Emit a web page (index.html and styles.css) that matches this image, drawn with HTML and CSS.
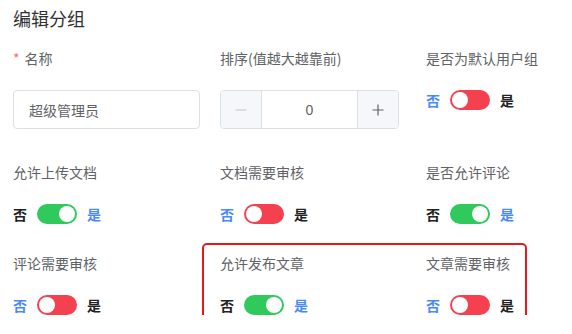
FILE: index.html
```html
<!DOCTYPE html>
<html lang="zh-CN">
<head>
    <meta charset="UTF-8">
    <meta name="viewport" content="width=device-width, initial-scale=1.0">
    <title>编辑分组</title>
    <link rel="stylesheet" href="styles.css">
</head>
<body>
    <div class="panel">
        <h2 class="title">编辑分组</h2>
        <div class="form">
            <!-- row 1 -->
            <div class="item item-wide">
                <label class="label"><span class="req">*</span>名称</label>
                <input class="text-input" type="text" value="超级管理员">
            </div>
            <div class="item item-wide">
                <label class="label">排序(值越大越靠前)</label>
                <div class="stepper">
                    <button class="step step-minus">
                        <svg width="12" height="12" viewBox="0 0 12 12"><path d="M0.5 6h11" stroke="#c0c4cc" stroke-width="1.2"/></svg>
                    </button>
                    <div class="step-value">0</div>
                    <button class="step step-plus">
                        <svg width="12" height="12" viewBox="0 0 12 12"><path d="M0.5 6h11M6 0.5v11" stroke="#606266" stroke-width="1.2"/></svg>
                    </button>
                </div>
            </div>
            <div class="item item-wide">
                <label class="label">是否为默认用户组</label>
                <div class="switch-row">
                    <span class="opt active">否</span>
                    <span class="switch off"><span class="knob"></span></span>
                    <span class="opt">是</span>
                </div>
            </div>

            <!-- row 2 -->
            <div class="item">
                <label class="label">允许上传文档</label>
                <div class="switch-row">
                    <span class="opt">否</span>
                    <span class="switch on"><span class="knob"></span></span>
                    <span class="opt active">是</span>
                </div>
            </div>
            <div class="item">
                <label class="label">文档需要审核</label>
                <div class="switch-row">
                    <span class="opt active">否</span>
                    <span class="switch off"><span class="knob"></span></span>
                    <span class="opt">是</span>
                </div>
            </div>
            <div class="item">
                <label class="label">是否允许评论</label>
                <div class="switch-row">
                    <span class="opt">否</span>
                    <span class="switch on"><span class="knob"></span></span>
                    <span class="opt active">是</span>
                </div>
            </div>

            <!-- row 3 -->
            <div class="item">
                <label class="label">评论需要审核</label>
                <div class="switch-row">
                    <span class="opt active">否</span>
                    <span class="switch off"><span class="knob"></span></span>
                    <span class="opt">是</span>
                </div>
            </div>
            <div class="item">
                <label class="label">允许发布文章</label>
                <div class="switch-row">
                    <span class="opt">否</span>
                    <span class="switch on"><span class="knob"></span></span>
                    <span class="opt active">是</span>
                </div>
            </div>
            <div class="item">
                <label class="label">文章需要审核</label>
                <div class="switch-row">
                    <span class="opt active">否</span>
                    <span class="switch off"><span class="knob"></span></span>
                    <span class="opt">是</span>
                </div>
            </div>

            <!-- highlight box over the last two items -->
            <div class="highlight"></div>
        </div>
    </div>
</body>
</html>
```

FILE: styles.css
```css
body {
    margin: 0;
    padding: 0;
    background-color: #fff;
    font-family: "Noto Sans CJK SC", "Noto Sans", Arial, sans-serif;
    color: #303133;
}
.panel {
    padding: 4px 13px 0 13px;
}
.title {
    margin: 0;
    font-size: 18px;
    line-height: 28px;
    font-weight: 400;
    color: #303133;
}
.form {
    position: relative;
    display: grid;
    grid-template-columns: 207px 206px 1fr;
    row-gap: 31px;
    margin-top: 18px;
}
.item-wide {
    margin-bottom: 4px;
}
.label {
    display: block;
    font-size: 14px;
    line-height: 17px;
    color: #606266;
    margin-bottom: 23px;
}
.req {
    color: #f56c6c;
    margin-right: 5px;
}
.text-input {
    display: block;
    box-sizing: border-box;
    width: 187px;
    height: 39px;
    padding: 0 15px;
    border: 1px solid #dcdfe6;
    border-radius: 4px;
    font-family: inherit;
    font-size: 14px;
    color: #606266;
    outline: none;
}
.stepper {
    box-sizing: border-box;
    display: flex;
    width: 179px;
    height: 39px;
    border: 1px solid #dcdfe6;
    border-radius: 4px;
    overflow: hidden;
}
.step {
    width: 41px;
    border: none;
    padding: 0;
    background-color: #f5f7fa;
    display: flex;
    align-items: center;
    justify-content: center;
    cursor: pointer;
}
.step-minus {
    border-right: 1px solid #dcdfe6;
}
.step-plus {
    border-left: 1px solid #dcdfe6;
}
.step-value {
    flex-grow: 1;
    display: flex;
    align-items: center;
    justify-content: center;
    font-family: "Liberation Sans", Arial, sans-serif;
    font-size: 14px;
    color: #606266;
}
.switch-row {
    display: flex;
    align-items: center;
    height: 20px;
}
.opt {
    font-size: 14px;
    font-weight: 700;
    color: #222;
    line-height: 20px;
}
.opt.active {
    color: #4a8af6;
}
.switch {
    position: relative;
    box-sizing: border-box;
    width: 40px;
    height: 20px;
    margin: 0 10px;
    border-radius: 10px;
}
.switch.off {
    background-color: #f5414f;
}
.switch.on {
    background-color: #2fc95c;
}
.knob {
    position: absolute;
    top: 2px;
    width: 16px;
    height: 16px;
    border-radius: 50%;
    background-color: #fff;
}
.switch.off .knob {
    left: 2px;
}
.switch.on .knob {
    right: 2px;
}
.highlight {
    position: absolute;
    left: 189px;
    top: 193px;
    width: 325px;
    height: 80px;
    border: 2px solid #e8191c;
    border-radius: 5px;
    box-sizing: border-box;
    pointer-events: none;
}
```
